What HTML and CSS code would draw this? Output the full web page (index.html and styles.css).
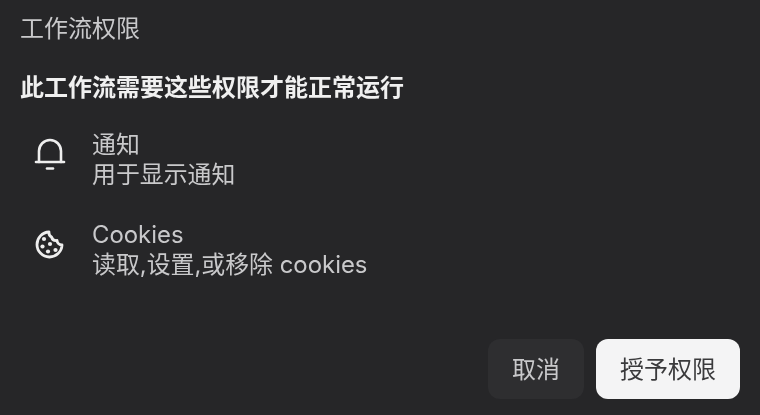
FILE: index.html
```html
<!DOCTYPE html>
<html lang="zh-CN">
<head>
<meta charset="utf-8">
<title>工作流权限</title>
<link rel="stylesheet" href="styles.css">
</head>
<body>
<div class="dialog">
  <div class="title">工作流权限</div>
  <div class="lead">此工作流需要这些权限才能正常运行</div>
  <div class="perms">
    <div class="perm">
      <svg class="icon" viewBox="0 0 36 36" fill="none" stroke="currentColor" stroke-width="2.600" stroke-linecap="round" stroke-linejoin="round"><path d="M4 26H32"/><path d="M7 26V15a11 11 0 0 1 22 0v11"/><path d="M15 32.500h6"/></svg>
      <div class="perm-text"><div>通知</div><div>用于显示通知</div></div>
    </div>
    <div class="perm">
      <svg class="icon" viewBox="0 0 36 36" fill="none" stroke="currentColor" stroke-width="2.800" stroke-linecap="round" stroke-linejoin="round"><path d="M17 6a12.500 12.500 0 1 0 13 13a5 5 0 0 1-5-4.500a5 5 0 0 1-5.500-3.500a5 5 0 0 1-2.500-5z"/><g stroke-width="4.200"><path d="M12 13h.01"/><path d="M18 18h.01"/><path d="M10.500 20.500h.01"/><path d="M16 25.500h.01"/><path d="M23.500 24h.01"/></g></svg>
      <div class="perm-text"><div>Cookies</div><div>读取,设置,或移除 cookies</div></div>
    </div>
  </div>
  <div class="actions">
    <button class="btn btn-cancel">取消</button>
    <button class="btn btn-grant">授予权限</button>
  </div>
</div>
</body>
</html>
```
FILE: styles.css
```css
html, body { margin: 0; height: 100%; }
body {
  background: #262628;
  color: #c9c9cb;
  font-family: Inter, "Noto Sans CJK SC", sans-serif;
  font-size: 24px;
  line-height: 30px;
  overflow: hidden;
}
.dialog {
  box-sizing: border-box;
  height: 415px;
  padding: 14px 20px 16px 20px;
  display: flex;
  flex-direction: column;
  filter: blur(0.5px);
}
.title { color: #c9c9cb; }
.lead {
  margin-top: 29px;
  color: #f0f0f0;
  font-weight: 700;
}
.perms {
  margin-top: 27px;
  padding-left: 12px;
  display: flex;
  flex-direction: column;
  gap: 30px;
}
.perm { display: flex; align-items: center; gap: 24px; }
.perm-text { font-size: 23.900px; }
.icon { width: 36px; height: 36px; color: #eeeeee; flex: none; margin-bottom: 12px; }
.actions {
  margin-top: auto;
  display: flex;
  justify-content: flex-end;
  gap: 12px;
}
.btn {
  font: inherit;
  height: 60px;
  padding: 2px 24px 0;
  border: 0;
  border-radius: 12px;
}
.btn-cancel { background: #2e2e30; color: #c9c9cb; }
.btn-grant { background: #f4f4f5; color: #3a3a3c; }
```
